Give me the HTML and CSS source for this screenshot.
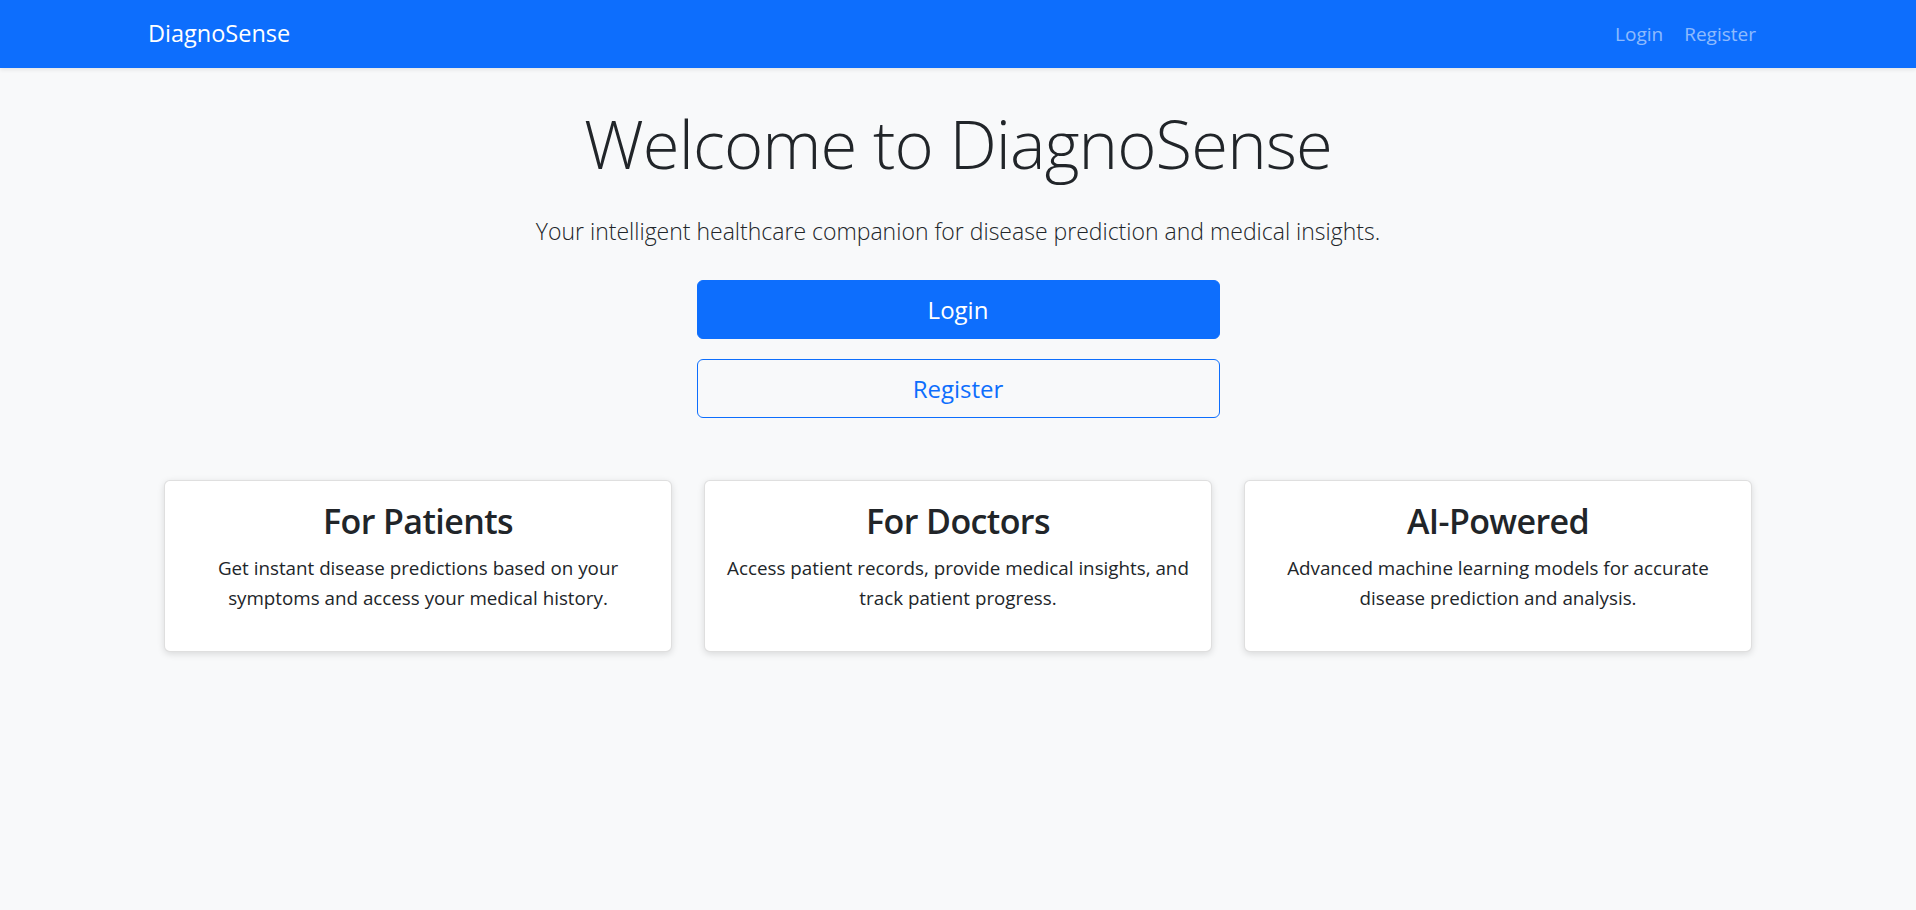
FILE: index.html
```html
<!DOCTYPE html>
<html lang="en">
<head>
<meta charset="utf-8">
<title>DiagnoSense</title>
<link rel="stylesheet" href="styles.css">
</head>
<body>
<nav class="navbar">
  <div class="nav-inner">
    <a class="brand" href="#">DiagnoSense</a>
    <div class="nav-links">
      <a class="nav-link" href="#">Login</a>
      <a class="nav-link" href="#">Register</a>
    </div>
  </div>
</nav>
<main class="main">
  <section class="hero">
    <h1 class="display">Welcome to DiagnoSense</h1>
    <p class="lead">Your intelligent healthcare companion for disease prediction and medical insights.</p>
    <div class="actions">
      <a class="btn btn-primary" href="#">Login</a>
      <a class="btn btn-outline" href="#">Register</a>
    </div>
  </section>
  <section class="cards">
    <div class="card">
      <h3 class="card-title">For Patients</h3>
      <p class="card-text">Get instant disease predictions based on your symptoms and access your medical history.</p>
    </div>
    <div class="card">
      <h3 class="card-title">For Doctors</h3>
      <p class="card-text">Access patient records, provide medical insights, and track patient progress.</p>
    </div>
    <div class="card">
      <h3 class="card-title">AI-Powered</h3>
      <p class="card-text">Advanced machine learning models for accurate disease prediction and analysis.</p>
    </div>
  </section>
</main>
</body>
</html>
```

FILE: styles.css
```css
* { box-sizing: border-box; }
html, body { margin: 0; padding: 0; }
body {
  font-family: "Open Sans", "Noto Sans", "Liberation Sans", sans-serif;
  background: #f8f9fa;
  color: #212529;
  min-height: 910px;
}
a { text-decoration: none; }

.navbar {
  background: #0d6efd;
  height: 68px;
  box-shadow: 0 2px 4px rgba(0,0,0,.08);
}
.nav-inner {
  height: 100%;
  display: flex;
  align-items: center;
  justify-content: space-between;
  padding: 0 150px 0 148px;
}
.brand {
  color: #fff;
  font-size: 23.5px;
  line-height: 1;
}
.nav-links { display: flex; gap: 1px; }
.nav-link {
  color: rgba(255,255,255,.55);
  font-size: 19px;
  padding: 8px 10px;
}

.main {
  display: flex;
  flex-direction: column;
  align-items: center;
}
.hero {
  display: flex;
  flex-direction: column;
  align-items: center;
  text-align: center;
  padding-top: 35px;
}
.display {
  font-weight: 300;
  font-size: 67px;
  letter-spacing: -0.9px;
  line-height: 1.2;
  margin: 0 0 30.5px;
}
.lead {
  font-weight: 300;
  font-size: 23px;
  line-height: 1.5;
  margin: 0 0 31.5px;
  color: #212529;
}
.actions {
  display: flex;
  flex-direction: column;
  gap: 20px;
  width: 523px;
}
.btn {
  display: flex;
  align-items: center;
  justify-content: center;
  height: 59px;
  border-radius: 6px;
  font-size: 24px;
  border: 1px solid #0d6efd;
}
.btn-primary { background: #0d6efd; color: #fff; }
.btn-outline { background: transparent; color: #0d6efd; }

.cards {
  display: grid;
  grid-template-columns: repeat(3, 508px);
  gap: 32px;
  margin-top: 62px;
}
.card {
  background: #fff;
  border: 1px solid rgba(0,0,0,.125);
  border-radius: 6px;
  box-shadow: 0 2px 7px rgba(0,0,0,.13);
  padding: 20.5px 18px 0;
  text-align: center;
  height: 172px;
}
.card-title {
  font-size: 34px;
  font-weight: 600;
  letter-spacing: -0.6px;
  line-height: 1.2;
  margin: 0 0 10.5px;
}
.card-text {
  font-size: 18.8px;
  line-height: 30px;
  margin: 0;
}
```
